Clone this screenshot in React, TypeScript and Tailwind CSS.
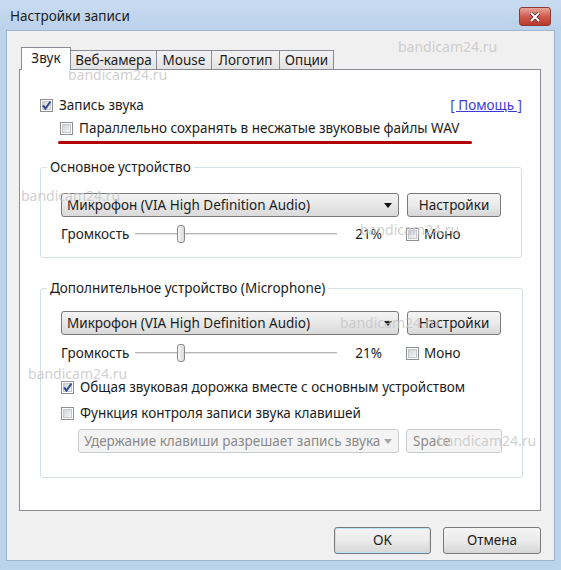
import React from "react";

const ui = "font-['Noto_Sans',sans-serif] text-[13.5px] text-[#1c1c1c]";

const Check = ({ checked = false }: { checked?: boolean }) => (
  <span className="relative flex h-[13px] w-[13px] shrink-0 items-center justify-center border border-[#8e8f8f] bg-white">
    <span className="h-[9px] w-[9px] border border-[#c4c7cb] bg-gradient-to-br from-[#cfd2d6] to-[#f6f6f6]" />
    {checked && (
      <svg viewBox="0 0 13 13" className="absolute -left-px -top-px h-[13px] w-[13px]">
        <path d="M3 6.5 L5.5 9.5 L10.5 2.5" fill="none" stroke="#2f4a8a" strokeWidth="2" />
      </svg>
    )}
  </span>
);

const Select = ({ text, disabled = false, width }: { text: string; disabled?: boolean; width: string }) => (
  <div
    className={`flex h-[24px] items-center justify-between rounded-[3px] border pl-[5px] pr-[6px] ${width} ${
      disabled
        ? "border-[#c9cccf] bg-[#f4f4f4] text-[#8a8a8a]"
        : "border-[#7a7a7a] bg-gradient-to-b from-[#f4f4f4] to-[#dadada]"
    }`}
  >
    <span className="whitespace-nowrap">{text}</span>
    <svg viewBox="0 0 8 5" className="h-[5px] w-[8px]">
      <path d="M0 0 H8 L4 5 Z" fill={disabled ? "#a8a8a8" : "#111"} />
    </svg>
  </div>
);

const Button = ({ children, className = "" }: { children: React.ReactNode; className?: string }) => (
  <div
    className={`flex h-[24px] w-[94px] items-center justify-center rounded-[3px] border border-[#7a7a7a] bg-gradient-to-b from-[#f4f4f4] via-[#ebebeb] to-[#d6d6d6] ${className}`}
  >
    {children}
  </div>
);

const Volume = () => (
  <div className="flex h-[18px] items-center">
    <span className="w-[74px]">Громкость</span>
    <div className="relative flex h-[18px] w-[202px] items-center">
      <div className="h-[2px] w-full border-t border-[#b6b6b6] bg-[#e6e6e6]" />
      <div className="absolute left-[42px] top-0 h-[18px] w-[8px] rounded-[3px] border border-[#8a8a8a] bg-gradient-to-r from-[#f6f6f6] to-[#d9d9d9]" />
    </div>
    <span className="ml-[15px] w-[30px] text-right">21%</span>
    <span className="ml-[24px] flex items-center gap-[5px]">
      <Check />
      Моно
    </span>
  </div>
);

const Group = ({ title, children, className = "" }: { title: string; children: React.ReactNode; className?: string }) => (
  <fieldset className={`ml-[20px] w-[480px] rounded-[3px] border border-[#d5dfe5] px-[20px] ${className}`}>
    <legend className="-ml-[14px] px-[3px] leading-[18px]">{title}</legend>
    {children}
  </fieldset>
);

const tabs = [
  { label: "Веб-камера", w: "w-[86px]" },
  { label: "Mouse", w: "w-[55px]" },
  { label: "Логотип", w: "w-[68px]" },
  { label: "Опции", w: "w-[54px]" },
];

const marks = [
  "left-[398px] top-[37px]",
  "left-[68px] top-[65px]",
  "left-[21px] top-[186px]",
  "left-[360px] top-[220px]",
  "left-[340px] top-[313px]",
  "left-[28px] top-[364px]",
  "left-[437px] top-[431px]",
];

export default function App() {
  return (
    <div className={`relative flex h-[570px] w-[561px] flex-col overflow-hidden bg-[#bcd3ec] ${ui}`}>
      {/* title bar */}
      <div className="flex h-[30px] shrink-0 items-start justify-between bg-gradient-to-b from-[#c9dcf1] to-[#bad1ea] pl-[10px] pr-[10px]">
        <span className="mt-[6px]">Настройки записи</span>
        <div className="mt-[7px] flex h-[19px] w-[32px] items-center justify-center rounded-[3px] border border-[#8b3a34] bg-gradient-to-b from-[#e7a49a] via-[#cf5b4f] to-[#b8392c]">
          <svg viewBox="0 0 12 10" className="h-[10px] w-[12px]">
            <path d="M2 1 L10 9 M10 1 L2 9" stroke="#5a2420" strokeWidth="3.4" />
            <path d="M2 1 L10 9 M10 1 L2 9" stroke="#fff" strokeWidth="2" />
          </svg>
        </div>
      </div>

      {/* client area */}
      <div className="mx-[6px] mb-[9px] flex-1 border border-[#9fb5cd] bg-[#f0f0f0] pl-[12px] pt-[16px]">
        <div className="flex h-[22px] items-end">
          <div className="relative z-10 -mb-px ml-[2px] flex h-[23px] w-[50px] items-center justify-center border border-b-0 border-[#898c95] bg-white pb-[2px]">
            Звук
          </div>
          {tabs.map((t) => (
            <div
              key={t.label}
              className={`flex h-[19px] items-center justify-center border border-b-0 border-l-0 border-[#898c95] bg-gradient-to-b from-[#f3f3f3] to-[#e3e3e3] ${t.w}`}
            >
              {t.label}
            </div>
          ))}
        </div>

        <div className="h-[442px] w-[522px] border border-[#898c95] bg-white pt-[26px]">
          <div className="flex h-[18px] items-center justify-between pl-[20px] pr-[18px]">
            <span className="flex items-center gap-[6px]">
              <Check checked />
              Запись звука
            </span>
            <span className="text-[#3b3bd4] underline">[ Помощь ]</span>
          </div>
          <div className="mt-[5px] flex h-[18px] items-center gap-[6px] pl-[40px]">
            <Check />
            Параллельно сохранять в несжатые звуковые файлы WAV
          </div>
          <div className="ml-[38px] mt-[4px] h-[3px] w-[414px] rounded-full bg-[#b30000]" />

          <Group title="Основное устройство" className="mt-[14px] pb-[14px] pt-[17px]">
            <div className="flex gap-[8px]">
              <Select text="Микрофон (VIA High Definition Audio)" width="w-[338px]" />
              <Button>Настройки</Button>
            </div>
            <div className="mt-[8px]">
              <Volume />
            </div>
          </Group>

          <Group title="Дополнительное устройство (Microphone)" className="mt-[21px] pb-[24px] pt-[14px]">
            <div className="flex gap-[8px]">
              <Select text="Микрофон (VIA High Definition Audio)" width="w-[338px]" />
              <Button>Настройки</Button>
            </div>
            <div className="mt-[9px]">
              <Volume />
            </div>
            <div className="mt-[16px] flex h-[18px] items-center gap-[6px]">
              <Check checked />
              Общая звуковая дорожка вместе с основным устройством
            </div>
            <div className="mt-[8px] flex h-[18px] items-center gap-[6px]">
              <Check />
              Функция контроля записи звука клавишей
            </div>
            <div className="ml-[17px] mt-[7px] flex gap-[7px]">
              <Select text="Удержание клавиши разрешает запись звука" width="w-[321px]" disabled />
              <div className="flex h-[24px] w-[96px] items-center rounded-[3px] border border-[#c9cccf] bg-[#f4f4f4] pl-[6px] text-[#8a8a8a]">
                Space
              </div>
            </div>
          </Group>
        </div>

        <div className="mt-[16px] flex w-[522px] justify-end gap-[12px]">
          <Button className="h-[27px] w-[97px] border-[#3c8fd0] shadow-[inset_0_0_0_1px_#b8e4fb]">OK</Button>
          <Button className="h-[27px] w-[98px]">Отмена</Button>
        </div>
      </div>

      {marks.map((m) => (
        <span
          key={m}
          className={`pointer-events-none absolute text-[14px] leading-[20px] text-[#c4c4c4]/80 ${m}`}
        >
          bandicam24.ru
        </span>
      ))}
    </div>
  );
}
